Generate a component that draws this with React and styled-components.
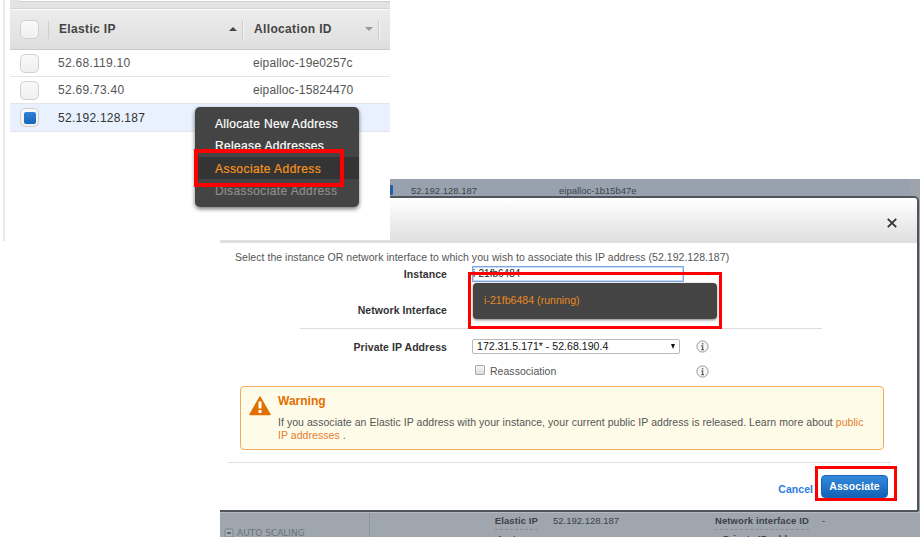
import React from "react";
import styled, { createGlobalStyle, css } from "styled-components";

const Global = createGlobalStyle`
  * { box-sizing: border-box; }
  body { margin: 0; background: #fff; overflow: hidden; font-family: "Liberation Sans", Arial, sans-serif; }
`;

const Page = styled.main`
  position: relative;
  width: 920px;
  height: 537px;
  overflow: hidden;
  background: #fff;
  padding: 179px 0 0 220px;
`;

/* address table */
const AddressPanel = styled.section`
  position: absolute;
  left: 0;
  top: 0;
  width: 390px;
  height: 240px;
  background: #fff;
  padding-left: 3px;
`;
const PanelBody = styled.div`
  height: 241px;
  border-left: 2px solid #e9e9e9;
  padding-left: 5px;
`;
const FilterStrip = styled.div`
  height: 9px;
  padding-left: 10px;
  background: #e3e3e3;
  border-bottom: 1px solid #d6d6d6;
`;
const FilterField = styled.div`
  height: 2px;
  background: #fff;
  border-bottom: 1px solid #d0d0d0;
`;
const columns = css`
  display: grid;
  grid-template-columns: 48px 195px 1fr;
  align-items: center;
`;
const HeaderRow = styled.div`
  ${columns}
  height: 41px;
  border-top: 1px solid #fafafa;
  border-bottom: 1px solid #c9c9c9;
  background: linear-gradient(#ececec, #dfdfdf);
  color: #444;
  font-size: 12px;
  font-weight: bold;
  letter-spacing: 0.35px;
`;
const HeaderCell = styled.div`
  display: flex;
  align-items: center;
  justify-content: space-between;
  height: 18px;
  padding: 0 ${(p) => p.$end}px 2px 1px;
  border-right: 1px solid #c9c9c9;
  box-shadow: 1px 0 #f6f6f6;
  margin-right: ${(p) => p.$gap}px;
`;
const CheckCell = styled.div`
  display: flex;
  align-items: center;
  width: 39px;
  height: 18px;
  padding-left: 10px;
  border-right: ${(p) => (p.$divider ? "1px solid #cfcfcf" : "0")};
`;
const Row = styled.div`
  ${columns}
  height: ${(p) => (p.$selected ? 28 : 27)}px;
  border-bottom: 1px solid #e2e4e6;
  background: ${(p) => (p.$selected ? "#e8f1fd" : "#fff")};
  color: ${(p) => (p.$selected ? "#333" : "#555")};
  font-size: 12px;
`;
const Cell = styled.span`
  letter-spacing: ${(p) => p.$ls}px;
  padding-top: ${(p) => (p.$low ? 1 : 0)}px;
`;
const Check = styled.span`
  display: grid;
  place-items: center;
  width: 19px;
  height: 19px;
  flex: none;
  border: 1.5px solid #d0d0d0;
  border-radius: 5px;
  background: linear-gradient(#f9f9f9, #efefef);
  &::after {
    content: "";
    width: 12px;
    height: 12px;
    border-radius: 2px;
    background: ${(p) => (p.$on ? "linear-gradient(#2f83d8, #1565ba)" : "none")};
  }
`;
const Arrow = styled.i`
  border: 4px solid transparent;
  border-width: ${(p) => (p.$up ? "0 4px 4px" : "4px 4px 0")};
  border-${(p) => (p.$up ? "bottom" : "top")}-color: ${(p) => (p.$up ? "#444" : "#999")};
`;
const ContextMenu = styled.nav`
  position: absolute;
  left: 195px;
  top: 107px;
  width: 164px;
  height: 100px;
  padding-top: 5px;
  border-radius: 5px;
  background: #444;
  box-shadow: 0 2px 4px rgba(0, 0, 0, 0.55);
`;
const MenuItem = styled.div`
  height: 22.4px;
  padding-left: 20px;
  line-height: 25px;
  font-size: 12px;
  letter-spacing: ${(p) => p.$ls}px;
  white-space: nowrap;
  color: ${(p) => (p.$active ? "#f7941e" : p.$disabled ? "#8c8c8c" : "#fff")};
  background: ${(p) => (p.$active ? "#343434" : "none")};
  -webkit-text-stroke: 0.2px currentColor;
`;
const InstanceMenu = styled.div`
  position: absolute;
  left: 473px;
  top: 283px;
  width: 244px;
  height: 36px;
  padding-left: 11px;
  border-radius: 4px;
  background: #444;
  box-shadow: 0 1px 3px rgba(0, 0, 0, 0.5);
  color: #e8891c;
  font-size: 10.5px;
  line-height: 35px;
  letter-spacing: 0.05px;
`;
const Highlight = styled.div`
  position: absolute;
  left: ${(p) => p.$x}px;
  top: ${(p) => p.$y}px;
  width: ${(p) => p.$w}px;
  height: ${(p) => p.$h}px;
  border: ${(p) => p.$t || 3}px solid #fe0000;
`;

/* dialog */
const Console = styled.section`
  display: flex;
  flex-direction: column;
  width: 700px;
  height: 358px;
  background: linear-gradient(to right, #98a2ae 690px, #9fa3ab 690px);
`;
const BackRow = styled.div`
  display: flex;
  align-items: center;
  height: 17px;
  padding: 5px 0 0 165px;
  font-size: 9.5px;
  color: #3d434a;
`;
const BlueBox = styled.span`
  width: 8px;
  height: 10px;
  margin-right: 18px;
  background: #2362a2;
  border-radius: 1px;
`;
const BackText = styled.span`
  width: ${(p) => p.$w}px;
`;
const Dialog = styled.div`
  width: 699px;
  height: 316px;
  flex: none;
  background: #fff;
  border: solid #50555b;
  border-width: 2px 2px 2px 0;
  border-radius: 0 5px 2px 0;
  overflow: hidden;
`;
const DialogHeader = styled.header`
  display: flex;
  align-items: center;
  justify-content: flex-end;
  height: 45px;
  padding: 4px 19px 0 0;
  background: linear-gradient(#fff, #dedede);
`;
const Intro = styled.p`
  margin: 0;
  height: 22px;
  padding: 7px 0 0 15px;
  color: #555;
  font-size: 10.5px;
  line-height: 15px;
  letter-spacing: 0.045px;
  white-space: nowrap;
`;
const Field = styled.div`
  display: grid;
  grid-template-columns: 227px 208px 1fr;
  column-gap: 25px;
  align-items: center;
  height: ${(p) => p.$h}px;
  padding-top: ${(p) => p.$top || 0}px;
`;
const Label = styled.label`
  color: #333;
  font-size: 10.5px;
  font-weight: bold;
  letter-spacing: 0.07px;
  text-align: right;
  white-space: nowrap;
`;
const InstanceInput = styled.div`
  width: 212px;
  height: 16px;
  border: 1px solid #7fa9e6;
  box-shadow: inset 0 0 0 1px #c5d9f6;
  color: #222;
  font-size: 10px;
  line-height: 13px;
`;
const Rule = styled.div`
  height: 1px;
  margin: ${(p) => p.$m};
  background: #ddd;
`;
const Select = styled.div`
  display: flex;
  align-items: center;
  justify-content: space-between;
  width: 208px;
  height: 15px;
  padding: 0 4px;
  border: 1px solid #b9b9b9;
  border-radius: 2px;
  color: #111;
  font-size: 10.5px;
  line-height: 13px;
  letter-spacing: 0.04px;
`;
const Caret = styled.i`
  border: solid transparent;
  border-width: 5px 2.5px 0;
  border-top-color: #111;
`;
const CheckLabel = styled.div`
  display: flex;
  align-items: center;
  gap: 5px;
  padding-left: 3px;
  color: #555;
  font-size: 10.5px;
  letter-spacing: 0.03px;
`;
const NativeCheck = styled.span`
  width: 10px;
  height: 10px;
  margin-top: -3px;
  border: 1px solid #aaa;
  border-radius: 1px;
  background: linear-gradient(#f4f4f4, #ddd);
`;
const InfoSvg = styled.svg`
  display: block;
  margin-left: -9.5px;
`;
const Warning = styled.div`
  display: flex;
  width: 644px;
  height: 64px;
  margin: 8px 0 12px 20px;
  padding: 8px 0 0 8px;
  border: 1px solid #f1ab5c;
  border-radius: 4px;
  background: #fffbe9;
`;
const WarnBody = styled.div`
  margin-left: 7px;
  color: #555;
  font-size: 10.5px;
  line-height: 13.5px;
  white-space: nowrap;
`;
const WarnTitle = styled.div`
  height: 20.5px;
  color: #e17000;
  font-size: 12px;
  font-weight: bold;
`;
const WarnLine = styled.div`
  letter-spacing: ${(p) => p.$ls}px;
`;
const Link = styled.a`
  color: #e57e2e;
`;
const Actions = styled.div`
  display: flex;
  align-items: center;
  justify-content: flex-end;
  height: 46px;
  padding-right: 29px;
`;
const Cancel = styled.a`
  margin: 6px 8px 0 0;
  color: #2a7de1;
  font-size: 10.5px;
  font-weight: bold;
  letter-spacing: 0.05px;
`;
const Submit = styled.div`
  width: 67px;
  height: 23px;
  border: 1px solid #1a66b9;
  border-radius: 4px;
  background: linear-gradient(#3589dd, #1362b5);
  color: #fff;
  font-size: 10.5px;
  font-weight: bold;
  line-height: 21px;
  letter-spacing: 0.1px;
  text-align: center;
  white-space: nowrap;
`;
const Footer = styled.div`
  display: grid;
  grid-template-columns: 150px 1fr;
  flex: 1;
  overflow: hidden;
  background: #9fa6ad;
  border-top: 1px solid #b4bac0;
  color: #3c4248;
  font-size: 9.5px;
`;
const Sidebar = styled.div`
  display: flex;
  align-items: flex-start;
  gap: 3px;
  padding: 15px 0 0 4px;
  border-right: 1px solid #8c949b;
  color: #6b737b;
  font-family: "DejaVu Sans", sans-serif;
  font-size: 9px;
  line-height: 11px;
  white-space: nowrap;
`;
const Details = styled.div`
  display: grid;
  grid-template-columns: 168px 177px 92px 1fr;
  grid-auto-rows: 18px;
  align-content: start;
  padding-top: 1px;
  line-height: 14px;
`;
const Term = styled.div`
  text-align: right;
  font-weight: bold;
  letter-spacing: 0.1px;
  white-space: nowrap;
  span { display: inline-block; height: 16px; border-bottom: 1px dashed #858c95; }
`;
const Value = styled.div`
  padding-left: 15px;
`;

function InfoIcon() {
  return (
    <InfoSvg width="13" height="13" viewBox="0 0 13 13">
      <circle cx="6.5" cy="6.5" r="5.6" fill="#f6f6f6" stroke="#999" />
      <path d="M6.6 3v1.5M5.3 5.8h1.3v3.6M5.2 9.6h2.8" fill="none" stroke="#666" strokeWidth="1.3" />
    </InfoSvg>
  );
}

const rows = [
  ["52.68.119.10", "eipalloc-19e0257c"],
  ["52.69.73.40", "eipalloc-15824470"],
  ["52.192.128.187", "", true],
];

export default function App() {
  return (
    <>
      <Global />
      <Page>
        <Console>
          <BackRow>
            <BlueBox />
            <BackText $w={148}>52.192.128.187</BackText>
            <BackText $w={100}>eipalloc-1b15b47e</BackText>
          </BackRow>
          <Dialog>
            <DialogHeader>
              <svg width="12" height="12" viewBox="0 0 12 12">
                <path d="M1.8 1.8l8.4 8.4M10.2 1.8L1.8 10.2" stroke="#333" strokeWidth="1.8" />
              </svg>
            </DialogHeader>
            <Intro>Select the instance OR network interface to which you wish to associate this IP address (52.192.128.187)</Intro>
            <Field $h={17}>
              <Label>Instance</Label>
              <InstanceInput>i-21fb6484</InstanceInput>
            </Field>
            <Field $h={46} $top={10}>
              <Label>Network Interface</Label>
            </Field>
            <Rule $m="0 95px 0 80px" />
            <Field $h={35}>
              <Label>Private IP Address</Label>
              <Select>172.31.5.171* - 52.68.190.4<Caret /></Select>
              <InfoIcon />
            </Field>
            <Field $h={14}>
              <span />
              <CheckLabel><NativeCheck />Reassociation</CheckLabel>
              <InfoIcon />
            </Field>
            <Warning>
              <svg width="22" height="22" viewBox="0 0 22 22">
                <path d="M11 2L21 19.5H1Z" fill="#e17000" stroke="#e17000" strokeWidth="1.5" strokeLinejoin="round" />
                <path d="M11 6.5v7M11 15v3" stroke="#fff" strokeWidth="3" />
              </svg>
              <WarnBody>
                <WarnTitle>Warning</WarnTitle>
                <WarnLine $ls={0.05}>
                  If you associate an Elastic IP address with your instance, your current public IP address is released. Learn more about <Link>public</Link>
                </WarnLine>
                <WarnLine $ls={0.05}><Link>IP addresses</Link> .</WarnLine>
              </WarnBody>
            </Warning>
            <Rule $m="0 26px 0 8px" />
            <Actions>
              <Cancel>Cancel</Cancel>
              <Submit>Associate</Submit>
            </Actions>
          </Dialog>
          <Footer>
            <Sidebar>
              <svg width="10" height="10" viewBox="0 0 10 10">
                <rect x="1" y="1" width="8" height="8" rx="1" fill="#a9b0b6" stroke="#7b838b" />
                <path d="M3 5h4" stroke="#444b52" strokeWidth="1.4" />
              </svg>
              AUTO SCALING
            </Sidebar>
            <Details>
              <Term><span>Elastic IP</span></Term>
              <Value>52.192.128.187</Value>
              <Term><span>Network interface ID</span></Term>
              <Value>-</Value>
              <Term><span>Instance</span></Term>
              <Value />
              <Term><span>Private IP address</span></Term>
              <Value />
            </Details>
          </Footer>
        </Console>

        <AddressPanel>
          <PanelBody>
            <FilterStrip><FilterField /></FilterStrip>
            <HeaderRow>
              <CheckCell $divider><Check /></CheckCell>
              <HeaderCell $end={5} $gap={10}>Elastic IP<Arrow $up /></HeaderCell>
              <HeaderCell $end={5} $gap={11}>Allocation ID<Arrow /></HeaderCell>
            </HeaderRow>
            {rows.map(([ip, id, on]) => (
              <Row key={ip} $selected={on}>
                <CheckCell><Check $on={on} /></CheckCell>
                <Cell $ls={0.27} $low={on}>{ip}</Cell>
                <Cell $ls={0.13}>{id}</Cell>
              </Row>
            ))}
          </PanelBody>
        </AddressPanel>

        <ContextMenu>
          <MenuItem $ls={0.32}>Allocate New Address</MenuItem>
          <MenuItem $ls={0.34}>Release Addresses</MenuItem>
          <MenuItem $ls={0.44} $active>Associate Address</MenuItem>
          <MenuItem $ls={0.38} $disabled>Disassociate Address</MenuItem>
        </ContextMenu>
        <InstanceMenu>i-21fb6484 (running)</InstanceMenu>

        <Highlight $x={194} $y={149} $w={150} $h={38} $t={4} />
        <Highlight $x={468} $y={272} $w={254} $h={57} />
        <Highlight $x={815} $y={466} $w={82} $h={35} />
      </Page>
    </>
  );
}
